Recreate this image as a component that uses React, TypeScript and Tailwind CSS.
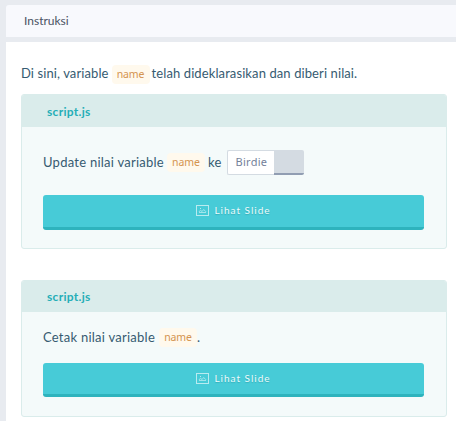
import type { ReactNode } from "react";

function Code({ children }: { children: ReactNode }) {
  return (
    <code className="flex h-[19px] w-[38px] items-center justify-center rounded bg-[#fff9ed] font-['Noto_Sans',sans-serif] text-[10.5px] leading-none tracking-[-0.1px] text-[#d49450]">
      {children}
    </code>
  );
}

function PictureIcon() {
  return (
    <svg className="h-[11px] w-[13px]" viewBox="0 0 13 11" fill="none" stroke="#b9ebf0">
      <rect x="0.5" y="0.5" width="12" height="10" />
      <path d="M3 7.5h7M3.3 7V6.2l1.4-.7 1.4 1 1.6-2 2 2V7" strokeWidth="0.8" />
      <path d="M4 3.5h1" />
    </svg>
  );
}

function SlideButton({ className }: { className: string }) {
  return (
    <button
      className={`flex w-[381px] items-center justify-center gap-[5px] rounded-[3px] border-b-[3px] border-[#2eb3bd] bg-[#47cbd7] pb-px font-['Lato',sans-serif] text-[10px] tracking-[1px] text-[#ecfbfc] [text-shadow:0_1px_1px_#35adb7] ${className}`}
    >
      <PictureIcon />
      <span>Lihat Slide</span>
    </button>
  );
}

function Card({ className, headerClass, children }: { className: string; headerClass: string; children: ReactNode }) {
  return (
    <section className={`overflow-hidden rounded-[3px] border border-[#daeceb] bg-[#f4fafa] ${className}`}>
      <h2 className={`flex items-center bg-[#daeceb] pl-[25px] text-[12px] font-bold tracking-[0.3px] text-[#25aeb7] ${headerClass}`}>
        script.js
      </h2>
      <div className="px-[21px]">{children}</div>
    </section>
  );
}

export default function App() {
  return (
    <main className="h-[421px] w-[456px] overflow-hidden bg-[#e8ebf0] pt-[5px] pl-[6px] font-['Lato',sans-serif] text-[#365b71]">
      <header className="flex h-8 items-center rounded-tl-[3px] bg-[#f8f9fd] pl-[18px] text-[12px] text-[#4a5263]">
        Instruksi
      </header>
      <div className="mt-[5px] h-[379px] bg-white pr-[9px] pl-[15px] text-[13px]">
        <p className="flex h-[52px] items-center whitespace-nowrap pt-[11px] tracking-[0.1px]">
          <span className="mr-[3px]">Di sini, variable</span>
          <span className="mr-[2px] pt-[2px]">
            <Code>name</Code>
          </span>
          <span>telah dideklarasikan dan diberi nilai.</span>
        </p>
        <Card className="h-[155px]" headerClass="h-8 pt-px">
          <div className="mt-[23px] flex h-[25px] items-center gap-[3px] whitespace-nowrap tracking-[0.25px]">
            <span>Update nilai variable</span>
            <Code>name</Code>
            <span>ke</span>
            <div className="ml-[2px] flex h-[25px] w-[77px] font-['Noto_Sans',sans-serif] text-[11px] text-[#74819a]">
              <span className="flex w-[47px] items-center rounded-l-[2px] border border-r-0 border-[#d4dbe2] bg-white pl-2">
                Birdie
              </span>
              <span className="flex-1 rounded-r-[2px] border-b-2 border-[#919db2] bg-[#d4dbe2]" />
            </div>
          </div>
          <SlideButton className="mt-5 h-[35px]" />
        </Card>
        <Card className="mt-[31px] h-[137px]" headerClass="h-[31px] pt-px">
          <div className="mt-4 flex h-[19px] items-center gap-[3px] whitespace-nowrap tracking-[0.25px]">
            <span>Cetak nilai variable</span>
            <span className="pl-px">
              <Code>name</Code>
            </span>
            <span className="-ml-[3px]">.</span>
          </div>
          <SlideButton className="mt-4 h-[34px]" />
        </Card>
      </div>
    </main>
  );
}
